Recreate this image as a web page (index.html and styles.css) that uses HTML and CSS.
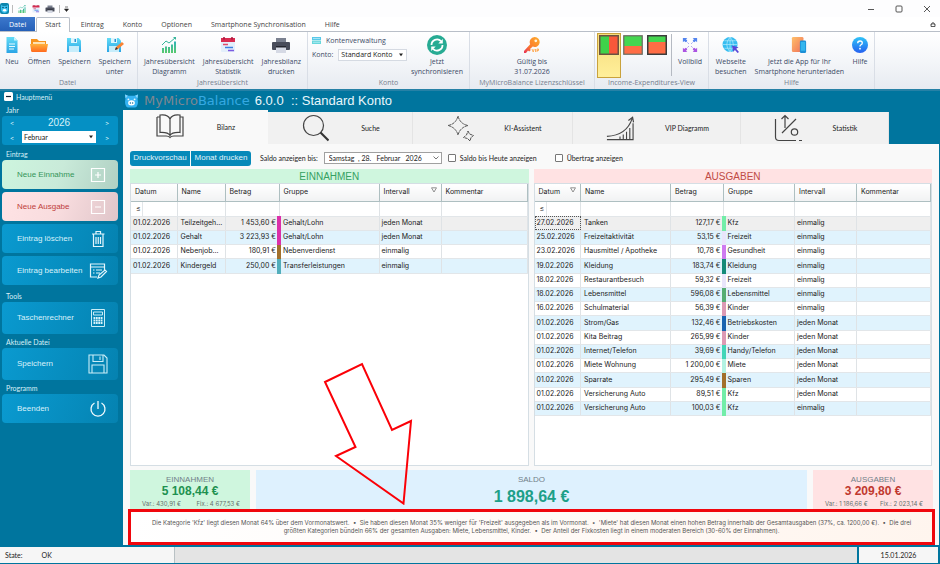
FILE: index.html
```html
<!DOCTYPE html>
<html lang="de">
<head>
<meta charset="utf-8">
<title>MyMicroBalance</title>
<link rel="stylesheet" href="styles.css">
</head>
<body>
<svg class="defs" aria-hidden="true">
  <defs>
    <linearGradient id="g-cyan" x1="0" y1="0" x2="0" y2="1"><stop offset="0" stop-color="#63dcf6"/><stop offset="1" stop-color="#2aa5e6"/></linearGradient>
    <linearGradient id="g-orange" x1="0" y1="0" x2="0" y2="1"><stop offset="0" stop-color="#ffb13b"/><stop offset="1" stop-color="#ff6a1e"/></linearGradient>
    <linearGradient id="g-chart" x1="0" y1="0" x2="0" y2="1"><stop offset="0" stop-color="#2fb3b8"/><stop offset="1" stop-color="#58c96b"/></linearGradient>
    <linearGradient id="g-key" x1="1" y1="0" x2="0" y2="1"><stop offset="0" stop-color="#ffb02e"/><stop offset="0.6" stop-color="#fb7a2c"/><stop offset="1" stop-color="#e8325a"/></linearGradient>
    <linearGradient id="g-full" x1="0" y1="0" x2="0" y2="1"><stop offset="0" stop-color="#4a8df5"/><stop offset="1" stop-color="#b04fe0"/></linearGradient>
    <linearGradient id="g-help" x1="0" y1="0" x2="0" y2="1"><stop offset="0" stop-color="#2fc4f7"/><stop offset="1" stop-color="#2560f0"/></linearGradient>
    <linearGradient id="g-tab" x1="0" y1="0" x2="1" y2="1"><stop offset="0" stop-color="#ffc069"/><stop offset="1" stop-color="#f0705a"/></linearGradient>
    <symbol id="i-chart" viewBox="0 0 16 16"><path d="M1 16v-5h2v5zM4 16V9.500h2V16zM7 16v-6h2v6zM10 16V7.500h2V16zM13 16V4.500h2V16z" fill="url(#g-chart)"/><path d="M1 8l4-4 3 2 6-5" fill="none" stroke="#36b59a" stroke-width="1"/><path d="M12 0h3v3z" fill="#36b59a"/></symbol>
    <symbol id="i-stat" viewBox="0 0 16 16"><rect x="1" y="1" width="14" height="14" rx="1" fill="#e3effb"/><path d="M1 1h14v4H1z" fill="#d92c50"/><path d="M4 0v2.500M12 0v2.500" stroke="#a8143a" stroke-width="1.500"/><path d="M3 7.500h5" stroke="#e04a6a" stroke-width="1.500"/><path d="M5 10.500h8" stroke="#3c7fe0" stroke-width="1.500"/><path d="M8 13.500h6" stroke="#7c5be0" stroke-width="1.500"/></symbol>
    <symbol id="i-print" viewBox="0 0 18 16"><path d="M4 1h10v5H4z" fill="#7b8190"/><path d="M1 5h16q1 0 1 1v6q0 1-1 1H1q-1 0-1-1V6q0-1 1-1z" fill="#484c5a"/><path d="M4 10h10v6H4z" fill="#d5d9e4"/><path d="M4 9h10v1.500H4z" fill="#23252e"/></symbol>
    <symbol id="i-save" viewBox="0 0 16 16"><path d="M1 1h11.500L15 3.500V15H1z" fill="url(#g-cyan)"/><path d="M5 1h6v5H5z" fill="#dff6fd"/><path d="M8.500 2h1.500v3H8.500z" fill="#2b8fd0"/><path d="M3 9h10v6H3z" fill="#c6edfb"/></symbol>
    <symbol id="i-piggy" viewBox="0 0 16 16"><path d="M1 1l4 1.500h6L15 1l-.5 4.500Q16 13 12 15H4Q0 13 1.500 5.500z" fill="#35b3f3"/><path d="M1 1l3 1.500L1.800 5zM15 1l-3 1.500L14.200 5z" fill="#8bd8fb"/><ellipse cx="8" cy="10" rx="3.600" ry="2.700" fill="#fff"/><circle cx="6.800" cy="10" r=".8" fill="#0b6ea0"/><circle cx="9.200" cy="10" r=".8" fill="#0b6ea0"/><circle cx="4.700" cy="6.300" r="1" fill="#e9f8ff"/><circle cx="11.300" cy="6.300" r="1" fill="#e9f8ff"/></symbol>
    <symbol id="i-down" viewBox="0 0 6 4"><path d="M1 .5h4L3 3.200z" fill="currentColor"/></symbol>
    <symbol id="i-filter" viewBox="0 0 6 6"><path d="M.5.8h5L3 5z" fill="none" stroke="#777" stroke-width=".8"/></symbol>
  </defs>
</svg>

<header class="titlebar">
  <div class="quick">
    <svg class="q-app" viewBox="0 0 10 11"><rect x="0" y="0" width="9" height="11" rx="2" fill="#0d86ad"/><path d="M1 2l2 1h3l2-1v5q-1 3-3.500 3T1 7z" fill="#3fc0ee"/><circle cx="3" cy="4.500" r=".8" fill="#064f6d"/><circle cx="6.200" cy="4.500" r=".8" fill="#064f6d"/><ellipse cx="4.600" cy="7.300" rx="1.700" ry="1.200" fill="#fff"/></svg>
    <span class="q-sep"></span>
    <svg class="q-icon"><use href="#i-chart"/></svg>
    <svg class="q-icon"><use href="#i-stat"/></svg>
    <svg class="q-icon"><use href="#i-print"/></svg>
    <span class="q-sep"></span>
    <svg class="q-more" viewBox="0 0 5 6"><path d="M1 1h3M.5 3h4L2.500 5.500z" fill="#222" stroke="#222" stroke-width=".6"/></svg>
  </div>
  <div class="window-buttons">
    <button aria-label="Minimieren"><svg viewBox="0 0 8 8"><path d="M1 4.500h6" stroke="#444" stroke-width=".9"/></svg></button>
    <button aria-label="Maximieren"><svg viewBox="0 0 8 8"><rect x="1" y="1" width="6" height="6" rx="1" fill="none" stroke="#444" stroke-width=".9"/></svg></button>
    <button aria-label="Schließen"><svg viewBox="0 0 8 8"><path d="M1 1l6 6M7 1L1 7" stroke="#444" stroke-width=".9"/></svg></button>
  </div>
</header>

<nav class="ribbon-tabs">
  <a class="file" href="#">Datei</a>
  <a class="current" href="#">Start</a>
  <a href="#">Eintrag</a>
  <a href="#">Konto</a>
  <a href="#">Optionen</a>
  <a href="#">Smartphone Synchronisation</a>
  <a href="#">Hilfe</a>
  <button class="collapse" aria-label="Menüband reduzieren"><svg viewBox="0 0 6 5"><path d="M.5 2.500L3 .5l2.500 2M1 4.500V3l2-1.500L5 3v1.500z" fill="none" stroke="#333" stroke-width=".8"/></svg></button>
</nav>

<section class="ribbon">
  <div class="group g-file">
    <div class="tools">
      <button class="tool"><svg viewBox="0 0 16 16"><path d="M2.500 0h7.500l3.500 3.500V16h-11z" fill="url(#g-cyan)"/><path d="M10 0l3.500 3.500H10z" fill="#c9f3fd"/><path d="M5 7h6M5 9.500h6M5 12h5" stroke="#e6fbff"/></svg><span>Neu</span></button>
      <button class="tool"><svg class="wide" viewBox="0 0 18 16"><path d="M1 2h6l2 2h7v10H1z" fill="#f7941d"/><path d="M3 5h12v4H3z" fill="#ffe2b0"/><path d="M0 7h18l-1.500 8h-15z" fill="url(#g-orange)"/></svg><span>Öffnen</span></button>
      <button class="tool"><svg><use href="#i-save"/></svg><span>Speichern</span></button>
      <button class="tool"><svg class="wide" viewBox="0 0 18 16"><use href="#i-save" width="16" height="16"/><path d="M9 13l1-3 6-5 2 2-6 5z" fill="#f98434"/><path d="M9 13l1-3 2 2z" fill="#333"/></svg><span>Speichern<br>unter</span></button>
    </div>
    <h2>Datei</h2>
  </div>
  <div class="group g-year">
    <div class="tools">
      <button class="tool"><svg><use href="#i-chart"/></svg><span>Jahresübersicht<br>Diagramm</span></button>
      <button class="tool"><svg><use href="#i-stat"/></svg><span>Jahresübersicht<br>Statistik</span></button>
      <button class="tool"><svg class="wide"><use href="#i-print"/></svg><span>Jahresbilanz<br>drucken</span></button>
    </div>
    <h2>Jahresübersicht</h2>
  </div>
  <div class="group g-account">
    <div class="tools">
      <div class="account">
        <button class="manage"><svg viewBox="0 0 9 7"><path d="M0 0h9v3H0z" fill="#58c8e8"/><path d="M0 3.500h9V7H0z" fill="#69d7dc"/><path d="M1 1.500h7M1 5.300h7" stroke="#d9f7fb" stroke-width=".6"/></svg>Kontenverwaltung</button>
        <div class="pick">
          <label for="konto">Konto:</label>
          <span class="select"><select id="konto"><option>Standard Konto</option></select><svg><use href="#i-down"/></svg></span>
        </div>
      </div>
      <button class="tool"><svg class="big" viewBox="0 0 20 20"><circle cx="10" cy="10" r="10" fill="#27ab93"/><path d="M4.500 10A5.500 5.500 0 0 1 14 6.200M15.500 10A5.500 5.500 0 0 1 6 13.800" fill="none" stroke="#fff" stroke-width="1.800"/><path d="M15.800 4v4.500h-4.500zM4.200 16v-4.500h4.500z" fill="#fff"/></svg><span>Jetzt<br>synchronisieren</span></button>
    </div>
    <h2>Konto</h2>
  </div>
  <div class="group g-license">
    <div class="tools">
      <button class="tool"><svg viewBox="0 0 16 16"><path d="M10.500 0a5 5 0 1 1-1.800 9.600L6 12l.8 1-1.600 1.500L4 13.600 2 16H0v-2l6.200-6.800A5 5 0 0 1 10.500 0z" fill="url(#g-key)"/><circle cx="11.800" cy="3.800" r="1.400" fill="#fff3dc"/><path d="M8 12l1.200 3 1-3M11.500 12v3M13 15v-3h1.500v1.500H13" fill="none" stroke="#ff9d3a" stroke-width=".8"/></svg><span>Gültig bis<br>31.07.2026</span></button>
    </div>
    <h2>MyMicroBalance Lizenzschlüssel</h2>
  </div>
  <div class="group g-view">
    <div class="tools">
      <button class="view active" aria-label="Nebeneinander"><svg viewBox="0 0 20 20"><path d="M1 1h9v18H1z" fill="#3fd24a"/><path d="M10 1h9v18h-9z" fill="#f8583a"/><rect x=".75" y=".75" width="18.500" height="18.500" fill="none" stroke="#6b5340" stroke-width="1.500"/></svg></button>
      <button class="view" aria-label="Untereinander"><svg viewBox="0 0 20 20"><path d="M1 1h18v10H1z" fill="#45d650"/><path d="M1 11h18v8H1z" fill="#ff6d45"/><rect x=".75" y=".75" width="18.500" height="18.500" fill="none" stroke="#66685c" stroke-width="1.200"/></svg></button>
      <button class="view" aria-label="Ausgaben groß"><svg viewBox="0 0 20 20"><path d="M1 1h18v6H1z" fill="#45d650"/><path d="M1 7h18v12H1z" fill="#ff6d45"/><rect x=".75" y=".75" width="18.500" height="18.500" fill="none" stroke="#3c3c3c" stroke-width="1.500"/></svg></button>
      <span class="divider"></span>
      <button class="tool"><svg class="wide" viewBox="0 0 18 18"><path d="M7.500 7.500L2 2M10.500 7.500L16 2M7.500 10.500L2 16M10.500 10.500L16 16" stroke="url(#g-full)" stroke-width="1" stroke-dasharray="1.500 .8"/><path d="M1 1h5L4.500 2.500 6 4 4 6 2.500 4.500 1 6zM17 1v5l-1.500-1.500L14 6l-2-2 1.500-1.500L12 1z" fill="#5385ef"/><path d="M1 17v-5l1.500 1.500L4 12l2 2-1.500 1.500L6 17zM17 17h-5l1.500-1.500L12 14l2-2 1.500 1.500L17 12z" fill="#ab54e2"/></svg><span>Vollbild</span></button>
    </div>
    <h2>Income-Expenditures-View</h2>
  </div>
  <div class="group g-help">
    <div class="tools">
      <button class="tool"><svg class="wide" viewBox="0 0 18 17"><circle cx="8" cy="8" r="8" fill="#36bdf0"/><path d="M0 8h16M8 0v16M2 4h12M2 12h12M8 0Q1 8 8 16M8 0q7 8 0 16" fill="none" stroke="#b8edfc" stroke-width=".7"/><path d="M10 9l7 2-2.500 1.500L17.500 16l-1.500 1-3-3.500L11.500 16z" fill="#5a47d8"/></svg><span>Webseite<br>besuchen</span></button>
      <button class="tool"><svg class="wide" viewBox="0 0 18 18"><rect x="1" y="0" width="13" height="17" rx="1.500" fill="url(#g-tab)"/><rect x="10" y="4" width="7" height="14" rx="1.500" fill="#1c8fd6"/><rect x="11" y="5.500" width="5" height="10" fill="#33b6ee"/></svg><span>Jetzt die App für Ihr<br>Smartphone herunterladen</span></button>
      <button class="tool"><svg viewBox="0 0 16 16"><circle cx="8" cy="8" r="8" fill="url(#g-help)"/><path d="M5.700 6.200Q5.700 4 8 4t2.300 2.100Q10.300 7.300 8.700 8 8 8.400 8 9.500" fill="none" stroke="#fff" stroke-width="1.300"/><circle cx="8" cy="11.700" r=".9" fill="#fff"/></svg><span>Hilfe</span></button>
    </div>
    <h2>Hilfe</h2>
  </div>
</section>

<div class="workspace">
  <aside class="sidebar">
    <button class="menu-head"><svg viewBox="0 0 9 9"><rect width="9" height="9" rx="1.500" fill="#fff"/><path d="M2 4.500h5" stroke="#123" stroke-width="1.200"/></svg>Hauptmenü</button>
    <h3>Jahr</h3>
    <div class="period">
      <button aria-label="Voriges Jahr">&lt;</button><output>2026</output><button aria-label="Nächstes Jahr">&gt;</button>
      <button aria-label="Voriger Monat">&lt;</button>
      <span class="select"><select aria-label="Monat"><option>Februar</option></select><svg><use href="#i-down"/></svg></span>
      <button aria-label="Nächster Monat">&gt;</button>
    </div>
    <h3>Eintrag</h3>
    <button class="action income">Neue Einnahme<svg viewBox="0 0 20 20"><path d="M3.500 3.500h13v13h-13zM10 7v6M7 10h6" fill="none" stroke="#fff" stroke-width="1.200"/></svg></button>
    <button class="action expense">Neue Ausgabe<svg viewBox="0 0 20 20"><path d="M3.500 3.500h13v13h-13zM7 10h6" fill="none" stroke="#fff" stroke-width="1.200"/></svg></button>
    <button class="action">Eintrag löschen<svg viewBox="0 0 20 20"><path d="M4 5h12.500M8 5V2.500h4.500V5M5.500 5.500v12h9.500v-12M8 8v7M10.250 8v7M12.500 8v7" fill="none" stroke="#e4f6fc" stroke-width="1.200"/></svg></button>
    <button class="action">Eintrag bearbeiten<svg viewBox="0 0 20 20"><path d="M9 16H2.500V3h14v6M2.500 6h14M5 9h1.500M8 9h6M5 12h1.500M8 12h4M10 17l1-3 6-5 1.500 1.500-5.500 5.500z" fill="none" stroke="#e4f6fc" stroke-width="1.200"/></svg></button>
    <h3>Tools</h3>
    <button class="action tall">Taschenrechner<svg viewBox="0 0 20 20"><path d="M3.500 1.500h13v17h-13zM5.500 4h9v3h-9z" fill="none" stroke="#c9edf7" stroke-width="1"/><path d="M5.500 10h9M5.500 12.500h9M5.500 15h9" stroke="#d9f3fa" stroke-width="1.800" stroke-dasharray="1.800 .6"/></svg></button>
    <h3>Aktuelle Datei</h3>
    <button class="action tall">Speichern<svg viewBox="0 0 20 20"><path d="M1 1h15l3 3v15H1zM5 1v6.500h10V1M12 2.500v3.500M4 19v-8h12v8" fill="none" stroke="#c9edf7" stroke-width="1.100"/></svg></button>
    <h3>Programm</h3>
    <button class="action">Beenden<svg viewBox="0 0 20 20"><path d="M10 2v8M6.500 4a7 7 0 1 0 7 0" fill="none" stroke="#f2fbfe" stroke-width="1.300"/></svg></button>
  </aside>

  <main class="content">
    <div class="brand">
      <svg><use href="#i-piggy"/></svg>
      <span class="logo">MyMicro<b>Balance</b></span>
      <h1>6.0.0 &nbsp;:: Standard Konto</h1>
    </div>
    <div class="tabs" role="tablist">
      <button role="tab" aria-selected="true"><svg viewBox="0 0 28 28"><path d="M1 4h3M1 4v19h9q3 0 4 1.500 1-1.500 4-1.500h9V4h-3M4 2q8-1 10 4 2-5 10-4v17.500q-8-.5-10 3-2-3.500-10-3zM14 6v16" fill="none" stroke="#444" stroke-width="1.200"/></svg><span>Bilanz</span></button>
      <button role="tab"><svg viewBox="0 0 28 28"><circle cx="12.500" cy="11.500" r="10" fill="none" stroke="#444" stroke-width="1.200"/><path d="M19.500 18.500l8 8" stroke="#333" stroke-width="2.200"/></svg><span>Suche</span></button>
      <button role="tab"><svg viewBox="0 0 28 28"><path d="M12 2q2 8 10 9.500-8 2-10 9.500Q10 13.500 2 11.500 10 10 12 2zM22 17l1.500 3 4 1.500-2.500 2-1 3.500-2.500-2.500-4-1 3-2.500z" fill="none" stroke="#555" stroke-dasharray="3 .6"/></svg><span>KI-Assistent</span></button>
      <button role="tab"><svg viewBox="0 0 30 28"><path d="M1 26.500h28V9M1 23Q22 22 28 4M24 6l4.500-3.500L29.500 8M25.500 26V14M22 26v-8M18.500 26v-5M15 26v-3" fill="none" stroke="#444" stroke-width="1.200"/></svg><span>VIP Diagramm</span></button>
      <button role="tab"><svg viewBox="0 0 28 28"><path d="M1.500 5v18q0 3.500 3.500 3.500h17M25 26.500h3M11 14V1.500M7.500 5L11 1.500 14.500 5M8 19L22 5" fill="none" stroke="#444" stroke-width="1.200"/><circle cx="20.500" cy="18" r="3.200" fill="none" stroke="#444" stroke-width="1.200"/></svg><span>Statistik</span></button>
    </div>

    <div class="page">
      <div class="options">
        <div class="print"><button>Druckvorschau</button><button>Monat drucken</button></div>
        <label for="bis">Saldo anzeigen bis:</label>
        <span class="select date"><select id="bis"><option>Samstag &nbsp;, 28. &nbsp;&nbsp;Februar &nbsp;&nbsp;2026</option></select><svg viewBox="0 0 6 4"><path d="M.5.500L3 3 5.500.500" fill="none" stroke="#555" stroke-width=".8"/></svg></span>
        <label class="check"><input type="checkbox">Saldo bis Heute anzeigen</label>
        <label class="check second"><input type="checkbox">Übertrag anzeigen</label>
      </div>

      <div class="ledgers">
        <section class="ledger in">
          <h2>EINNAHMEN</h2>
          <div class="grid">
            <table>
              <colgroup><col class="c-date"><col class="c-name"><col class="c-sum"><col class="c-group"><col class="c-int"><col></colgroup>
              <thead>
                <tr><th>Datum</th><th>Name</th><th>Betrag</th><th>Gruppe</th><th class="sorted">Intervall<svg><use href="#i-filter"/></svg></th><th>Kommentar</th></tr>
                <tr class="filter"><td><span>≤</span></td><td></td><td></td><td></td><td></td><td></td></tr>
              </thead>
              <tbody>
                <tr class="selected"><td>01.02.2026</td><td>Teilzeitgeh...</td><td>1 453,60 €</td><td class="magenta">Gehalt/Lohn</td><td>jeden Monat</td><td></td></tr>
                <tr><td>01.02.2026</td><td>Gehalt</td><td>3 223,93 €</td><td class="magenta">Gehalt/Lohn</td><td>jeden Monat</td><td></td></tr>
                <tr><td>01.02.2026</td><td>Nebenjob...</td><td>180,91 €</td><td class="brown">Nebenverdienst</td><td>einmalig</td><td></td></tr>
                <tr><td>01.02.2026</td><td>Kindergeld</td><td>250,00 €</td><td class="teal">Transferleistungen</td><td>einmalig</td><td></td></tr>
              </tbody>
            </table>
          </div>
        </section>
        <section class="ledger out">
          <h2>AUSGABEN</h2>
          <div class="grid">
            <table>
              <colgroup><col class="c-date"><col class="c-name"><col class="c-sum"><col class="c-group"><col class="c-int"><col></colgroup>
              <thead>
                <tr><th class="sorted">Datum<svg><use href="#i-filter"/></svg></th><th>Name</th><th>Betrag</th><th>Gruppe</th><th>Intervall</th><th>Kommentar</th></tr>
                <tr class="filter"><td><span>≤</span></td><td></td><td></td><td></td><td></td><td></td></tr>
              </thead>
              <tbody>
                <tr class="selected focus"><td>27.02.2026</td><td>Tanken</td><td>127,17 €</td><td class="mint">Kfz</td><td>einmalig</td><td></td></tr>
                <tr><td>25.02.2026</td><td>Freizeitaktivität</td><td>53,15 €</td><td class="lilac">Freizeit</td><td>einmalig</td><td></td></tr>
                <tr><td>23.02.2026</td><td>Hausmittel / Apotheke</td><td>10,78 €</td><td class="violet">Gesundheit</td><td>einmalig</td><td></td></tr>
                <tr><td>19.02.2026</td><td>Kleidung</td><td>183,74 €</td><td class="pine">Kleidung</td><td>einmalig</td><td></td></tr>
                <tr><td>18.02.2026</td><td>Restaurantbesuch</td><td>59,32 €</td><td class="lilac">Freizeit</td><td>einmalig</td><td></td></tr>
                <tr><td>18.02.2026</td><td>Lebensmittel</td><td>596,08 €</td><td class="green">Lebensmittel</td><td>einmalig</td><td></td></tr>
                <tr><td>16.02.2026</td><td>Schulmaterial</td><td>56,39 €</td><td class="rose">Kinder</td><td>einmalig</td><td></td></tr>
                <tr><td>01.02.2026</td><td>Strom/Gas</td><td>132,46 €</td><td class="blue">Betriebskosten</td><td>jeden Monat</td><td></td></tr>
                <tr><td>01.02.2026</td><td>Kita Beitrag</td><td>265,99 €</td><td class="rose">Kinder</td><td>jeden Monat</td><td></td></tr>
                <tr><td>01.02.2026</td><td>Internet/Telefon</td><td>39,69 €</td><td class="turquoise">Handy/Telefon</td><td>jeden Monat</td><td></td></tr>
                <tr><td>01.02.2026</td><td>Miete Wohnung</td><td>1 200,00 €</td><td class="pale">Miete</td><td>jeden Monat</td><td></td></tr>
                <tr><td>01.02.2026</td><td>Sparrate</td><td>295,49 €</td><td class="brown">Sparen</td><td>jeden Monat</td><td></td></tr>
                <tr><td>01.02.2026</td><td>Versicherung Auto</td><td>89,51 €</td><td class="mint">Kfz</td><td>jeden Monat</td><td></td></tr>
                <tr><td>01.02.2026</td><td>Versicherung Auto</td><td>100,03 €</td><td class="mint">Kfz</td><td>einmalig</td><td></td></tr>
              </tbody>
            </table>
          </div>
        </section>
      </div>

      <div class="totals">
        <section class="total in"><h3>EINNAHMEN</h3><strong>5 108,44 €</strong><p><span>Var.: 430,91 €</span><span>Fix.: 4 677,53 €</span></p></section>
        <section class="total balance"><h3>SALDO</h3><strong>1 898,64 €</strong></section>
        <section class="total out"><h3>AUSGABEN</h3><strong>3 209,80 €</strong><p><span>Var.: 1 186,66 €</span><span>Fix.: 2 023,14 €</span></p></section>
      </div>

      <div class="insight">
        <p>Die Kategorie 'Kfz' liegt diesen Monat 64% über dem Vormonatswert. &nbsp;• &nbsp;Sie haben diesen Monat 35% weniger für 'Freizeit' ausgegeben als im Vormonat. &nbsp;• &nbsp;'Miete' hat diesen Monat einen hohen Betrag innerhalb der Gesamtausgaben (37%, ca. 1200,00 €). &nbsp;• &nbsp;Die drei<br>größten Kategorien bündeln 66% der gesamten Ausgaben: Miete, Lebensmittel, Kinder. &nbsp;• &nbsp;Der Anteil der Fixkosten liegt in einem moderaten Bereich (30-60% der Einnahmen).</p>
        <svg class="arrow" viewBox="0 0 92 144" aria-hidden="true"><path d="M3 21L40 3l30 66 19-9-7.500 82.500L14 95l19.500-9z" fill="none" stroke="#fb0007" stroke-width="2"/></svg>
      </div>
    </div>
  </main>
</div>

<footer class="statusbar">
  <div class="state"><span>State:</span><span>OK</span></div>
  <div class="fill"></div>
  <time datetime="2026-01-15">15.01.2026</time>
</footer>
</body>
</html>
```
FILE: styles.css
```css
:root {
  --teal: #00759e;
  --ui: "Open Sans", "Noto Sans", sans-serif;
  --heading: "Liberation Sans", Arial, sans-serif;
  --narrow: Lato, "Liberation Sans", sans-serif;
  --grid: Inter, "Liberation Sans", sans-serif;
}
* { box-sizing: border-box; }
body {
  margin: 0;
  min-height: 100vh;
  display: flex;
  flex-direction: column;
  background: #fff;
  color: #222;
  font: 7px/10px var(--narrow);
}
h1, h2, h3, p { margin: 0; font-weight: normal; font-size: inherit; }
button, select, input { font: inherit; color: inherit; margin: 0; }
button { padding: 0; border: 0; background: none; }
a { color: inherit; text-decoration: none; }
svg { display: block; flex: none; }
.defs { position: absolute; width: 0; height: 0; }

/* Title bar */
.titlebar { height: 17px; display: flex; justify-content: space-between; background: #fdfdfe; }
.quick { display: flex; align-items: center; gap: 4px; }
.q-app { width: 10px; height: 11px; }
.q-icon { width: 10px; height: 8px; }
.q-sep { width: 1px; height: 8px; background: #bbb; }
.q-more { width: 5px; height: 6px; }
.q-sep:first-of-type { margin-left: -2px; }
.window-buttons { display: flex; gap: 20px; padding-right: 9px; align-items: center; }
.window-buttons svg { width: 8px; height: 8px; }

/* Ribbon */
.ribbon-tabs {
  display: flex;
  height: 15px;
  border-bottom: 1px solid #b9bfc8;
  font: 7px/15px var(--ui);
  color: #444;
}
.ribbon-tabs a { padding: 0 9px; margin-right: 1px; }
.ribbon-tabs .file { background: linear-gradient(#3c78cc, #2560b8); color: #fff; }
.ribbon-tabs .current { height: 15px; padding: 0 8px; margin-right: 2px; background: #fff; border: 1px solid #b9bfc8; border-bottom: 0; border-radius: 2px 2px 0 0; line-height: 13px; }
.ribbon-tabs .collapse { margin-left: auto; padding-right: 4px; }
.collapse svg { width: 6px; height: 5px; }
.ribbon {
  display: flex;
  height: 59px;
  background: linear-gradient(#fff, #f4f6f9 50%, #e7ebf1);
  border-bottom: 2px solid #2681a6;
  font: 7px/10px var(--ui);
  color: #3b4a66;
}
.group { display: flex; flex-direction: column; border-right: 1px solid #d9dee6; padding: 1px 2px 0; }
.group h2 { height: 11px; text-align: center; color: #76808f; }
.tools { flex: 1; display: flex; justify-content: center; }
.tool { display: flex; flex-direction: column; align-items: center; flex: 1 1 auto; padding-top: 4px; gap: 4px; white-space: nowrap; }
.tool svg { width: 16px; height: 16px; }
.tool .wide { width: 18px; }
.tool .big { width: 20px; height: 20px; margin: -2px 0; }
.g-file { width: 138px; padding-left: 0; }
.g-year { width: 170px; }
.g-account { width: 162px; }
.g-license { width: 125px; }
.g-view { width: 114px; }
.g-help { width: 166px; }
.account { width: 97px; padding: 2px 0 0 2px; }
.manage { display: flex; align-items: center; gap: 5px; height: 11px; }
.manage svg { width: 9px; height: 7px; }
.pick { display: flex; align-items: center; gap: 5px; margin-top: 3px; height: 12px; }
.select { display: flex; align-items: center; position: relative; background: #fff; }
.select select { appearance: none; width: 100%; height: 100%; border: 0; padding: 0 2px; background: none; }
.select svg { position: absolute; right: 2px; width: 6px; height: 4px; }
.pick .select { flex: 1; height: 12px; border: 1px solid #d5dae2; color: #222; }
.view { width: 24px; height: 45px; display: flex; justify-content: center; padding-top: 2px; }
.view svg { width: 20px; height: 20px; }
.view.active { background: linear-gradient(#f5dc7c, #ffef9a); border: 1px solid #c9a23c; padding-top: 1px; }
.divider { width: 1px; height: 42px; margin: 1px 2px; background: #b5bac2; }

/* Workspace */
.workspace { flex: 1; display: grid; grid-template-columns: 122px minmax(0, 1fr); background: var(--teal); }
.sidebar { padding: 0 4px 0 2px; color: #d8f0f8; }
.menu-head { display: flex; align-items: center; gap: 3px; height: 11px; padding-left: 2px; }
.menu-head svg { width: 9px; height: 9px; }
.sidebar h3 { height: 14px; padding: 3px 0 0 4px; }
.period + h3 { height: 15px; padding-top: 4px; }
.period { display: grid; grid-template-columns: 20px 1fr 22px; grid-auto-rows: 14px; gap: 1px 0; border-radius: 3px; background: #0590c4; font-size: 8px; text-align: center; }
.period output { font: 10px/14px var(--heading); }
.period .select { color: #222; font-size: 7px; height: 12px; }
.action {
  display: flex;
  align-items: center;
  justify-content: space-between;
  width: 100%;
  height: 29px;
  margin-bottom: 3px;
  padding: 0 10px 0 15px;
  border-radius: 4px;
  background: linear-gradient(110deg, #0a9ad0, #068abb 70%, #0582b0);
  font-family: var(--heading);
  font-size: 8px;
  color: #d8f1fa;
}
.action svg { width: 20px; height: 20px; }
.action.tall { height: 32px; margin-bottom: 0; }
.action.income { background: linear-gradient(110deg, #cdf5de, #c9ead9 50%, #b0d0c3); color: #35955a; }
.action.expense { background: linear-gradient(110deg, #ffe3e5, #f8dcde 50%, #dfc5c9); color: #c0403c; }

.content { display: flex; flex-direction: column; }
.brand { display: flex; align-items: center; height: 19px; padding-left: 2px; gap: 5px; color: #e9f7fc; }
.brand svg { width: 15px; height: 16px; }
.brand h1 { font: 13px/16px var(--heading); white-space: pre; }
.logo { font: 13px/16px "DejaVu Sans", sans-serif; color: #7d8791; }
.logo b { font-weight: normal; color: #35a9e2; }
.tabs { display: grid; grid-template-columns: 145fr 145fr 160fr 168fr 148fr 51fr; align-items: end; padding-left: 1px; }
.tabs button { display: flex; align-items: center; height: 32px; background: #f1f1f1; border-right: 1px solid #e4e4e4; color: #222; }
.tabs [aria-selected] { height: 34px; background: #f9f9f9; border: 0; }
.tabs svg { width: 28px; height: 28px; margin-left: 33px; }
.tabs span { flex: 1; text-align: center; }

.page { flex: 1; display: flex; flex-direction: column; margin: 0 1px; padding: 0 4px 0 5px; background: #f9f9f9; }
.options { display: flex; align-items: center; height: 25px; padding: 3px 0 0 2px; }
.print { display: flex; gap: 1px; margin-right: 9px; border-radius: 3px; overflow: hidden; }
.print button { height: 15px; width: 60px; background: #0689b9; color: #e2f4fb; font-family: var(--heading); font-size: 8px; }
.date { width: 118px; height: 12px; margin: 0 6px; border: 1px solid #a0a0a0; }
.date select { padding-left: 4px; }
.check { display: flex; align-items: center; gap: 4px; }
.check input { appearance: none; width: 8px; height: 8px; border: 1px solid #777; border-radius: 1px; background: #fff; }
.second { margin-left: 18px; }

/* Ledgers */
.ledgers { flex: 1; display: flex; gap: 5px; padding: 0 3px 0 2px; }
.ledger { flex: 1 1 0; min-width: 0; display: flex; flex-direction: column; }
.ledger h2 { height: 14px; font: 10px/15px var(--heading); text-align: center; }
.ledger.in h2 { background: #cff6de; color: #35a162; }
.ledger.out h2 { background: #ffe2e3; color: #c04a45; }
.grid { flex: 1; background: #fff; border: 1px solid #d5dee4; }
table { width: 100%; table-layout: fixed; border-collapse: collapse; font: 7px/10px var(--grid); }
th { height: 17px; padding: 0 4px; text-align: left; font-weight: normal; background: linear-gradient(#fff, #f1f2f3); border-right: 1px solid #aebfc1; border-bottom: 1px solid #aebfc1; }
.sorted svg { float: right; width: 6px; height: 6px; }
td { height: 14px; padding: 0 2px; white-space: nowrap; overflow: hidden; border-right: 1px solid #dfe3e6; border-bottom: 1px solid #e2e6e9; }
tbody tr:nth-child(4n) td { height: 15px; }
tbody tr:nth-child(even) { background: #e0f3fd; }
tbody .selected { background: #efefef; }
.focus td:first-child { outline: 1px dotted #555; outline-offset: -1px; }
td:nth-child(2) { padding-left: 3px; }
tbody td:nth-child(3) { text-align: right; padding-right: 1px; }
tbody td:nth-child(4) { padding-left: 2px; border-left: 4px solid var(--mark); }
.filter td { height: 15px; }
.filter span { display: block; width: 10px; padding-left: 3px; border-right: 1px solid #e2e6e9; line-height: 14px; }
.in .c-date { width: 46px; }
.in .c-name { width: 48px; }
.in .c-sum { width: 54px; }
.in .c-group { width: 100px; }
.in .c-int { width: 62px; }
.out .c-date { width: 46px; }
.out .c-name { width: 90px; }
.out .c-sum { width: 53px; }
.out .c-group { width: 71px; }
.out .c-int { width: 62px; }
.magenta { --mark: #dc2fa9; }
.brown { --mark: #a2702b; }
.teal { --mark: #52aebb; }
.mint { --mark: #72eda8; }
.lilac { --mark: #e9e5fb; }
.violet { --mark: #cf7af0; }
.pine { --mark: #148a78; }
.green { --mark: #55ad74; }
.rose { --mark: #dd9ab4; }
.blue { --mark: #1863b0; }
.turquoise { --mark: #42d5b8; }
.pale { --mark: #b2f2e2; }

/* Totals */
.totals { display: grid; grid-template-columns: 120px 1fr 120px; gap: 6px; height: 43px; padding: 4px 2px 0; text-align: center; }
.total { padding-top: 5px; color: #65706c; }
.total h3 { font: 8px/9px var(--heading); color: #718089; }
.total strong { display: block; font: bold 12px/14px var(--heading); }
.total p { display: flex; justify-content: space-between; padding: 0 10px 0 12px; font: 6px/11px var(--grid); }
.total.in { background: #cff6de; }
.total.in strong { color: #1e9150; }
.total.out { background: #ffe2e3; }
.total.out strong { color: #c0392f; }
.total.balance { background: #def1fe; }
.balance strong { font-size: 16px; line-height: 25px; color: #1d9f88; }

.insight { position: relative; height: 36px; padding-top: 7px; border: 3px solid #f0070d; background: linear-gradient(110deg, #fff, #fff5ee); color: #555; font: 6px/8px var(--grid); text-align: center; }
.arrow { position: absolute; left: 191px; bottom: 37px; width: 92px; height: 144px; }

/* Status bar */
.statusbar { display: flex; height: 19px; border: solid var(--teal); border-width: 2px 0 1px; background: #e4e4e4; line-height: 16px; }
.state { width: 175px; display: flex; gap: 19px; padding-left: 5px; background: #f6f6f6; border-right: 1px solid #b9c1c4; }
.fill { flex: 1; }
.statusbar time { width: 83px; text-align: center; background: #f6f6f6; border: solid var(--teal); border-width: 0 2px; }
```
